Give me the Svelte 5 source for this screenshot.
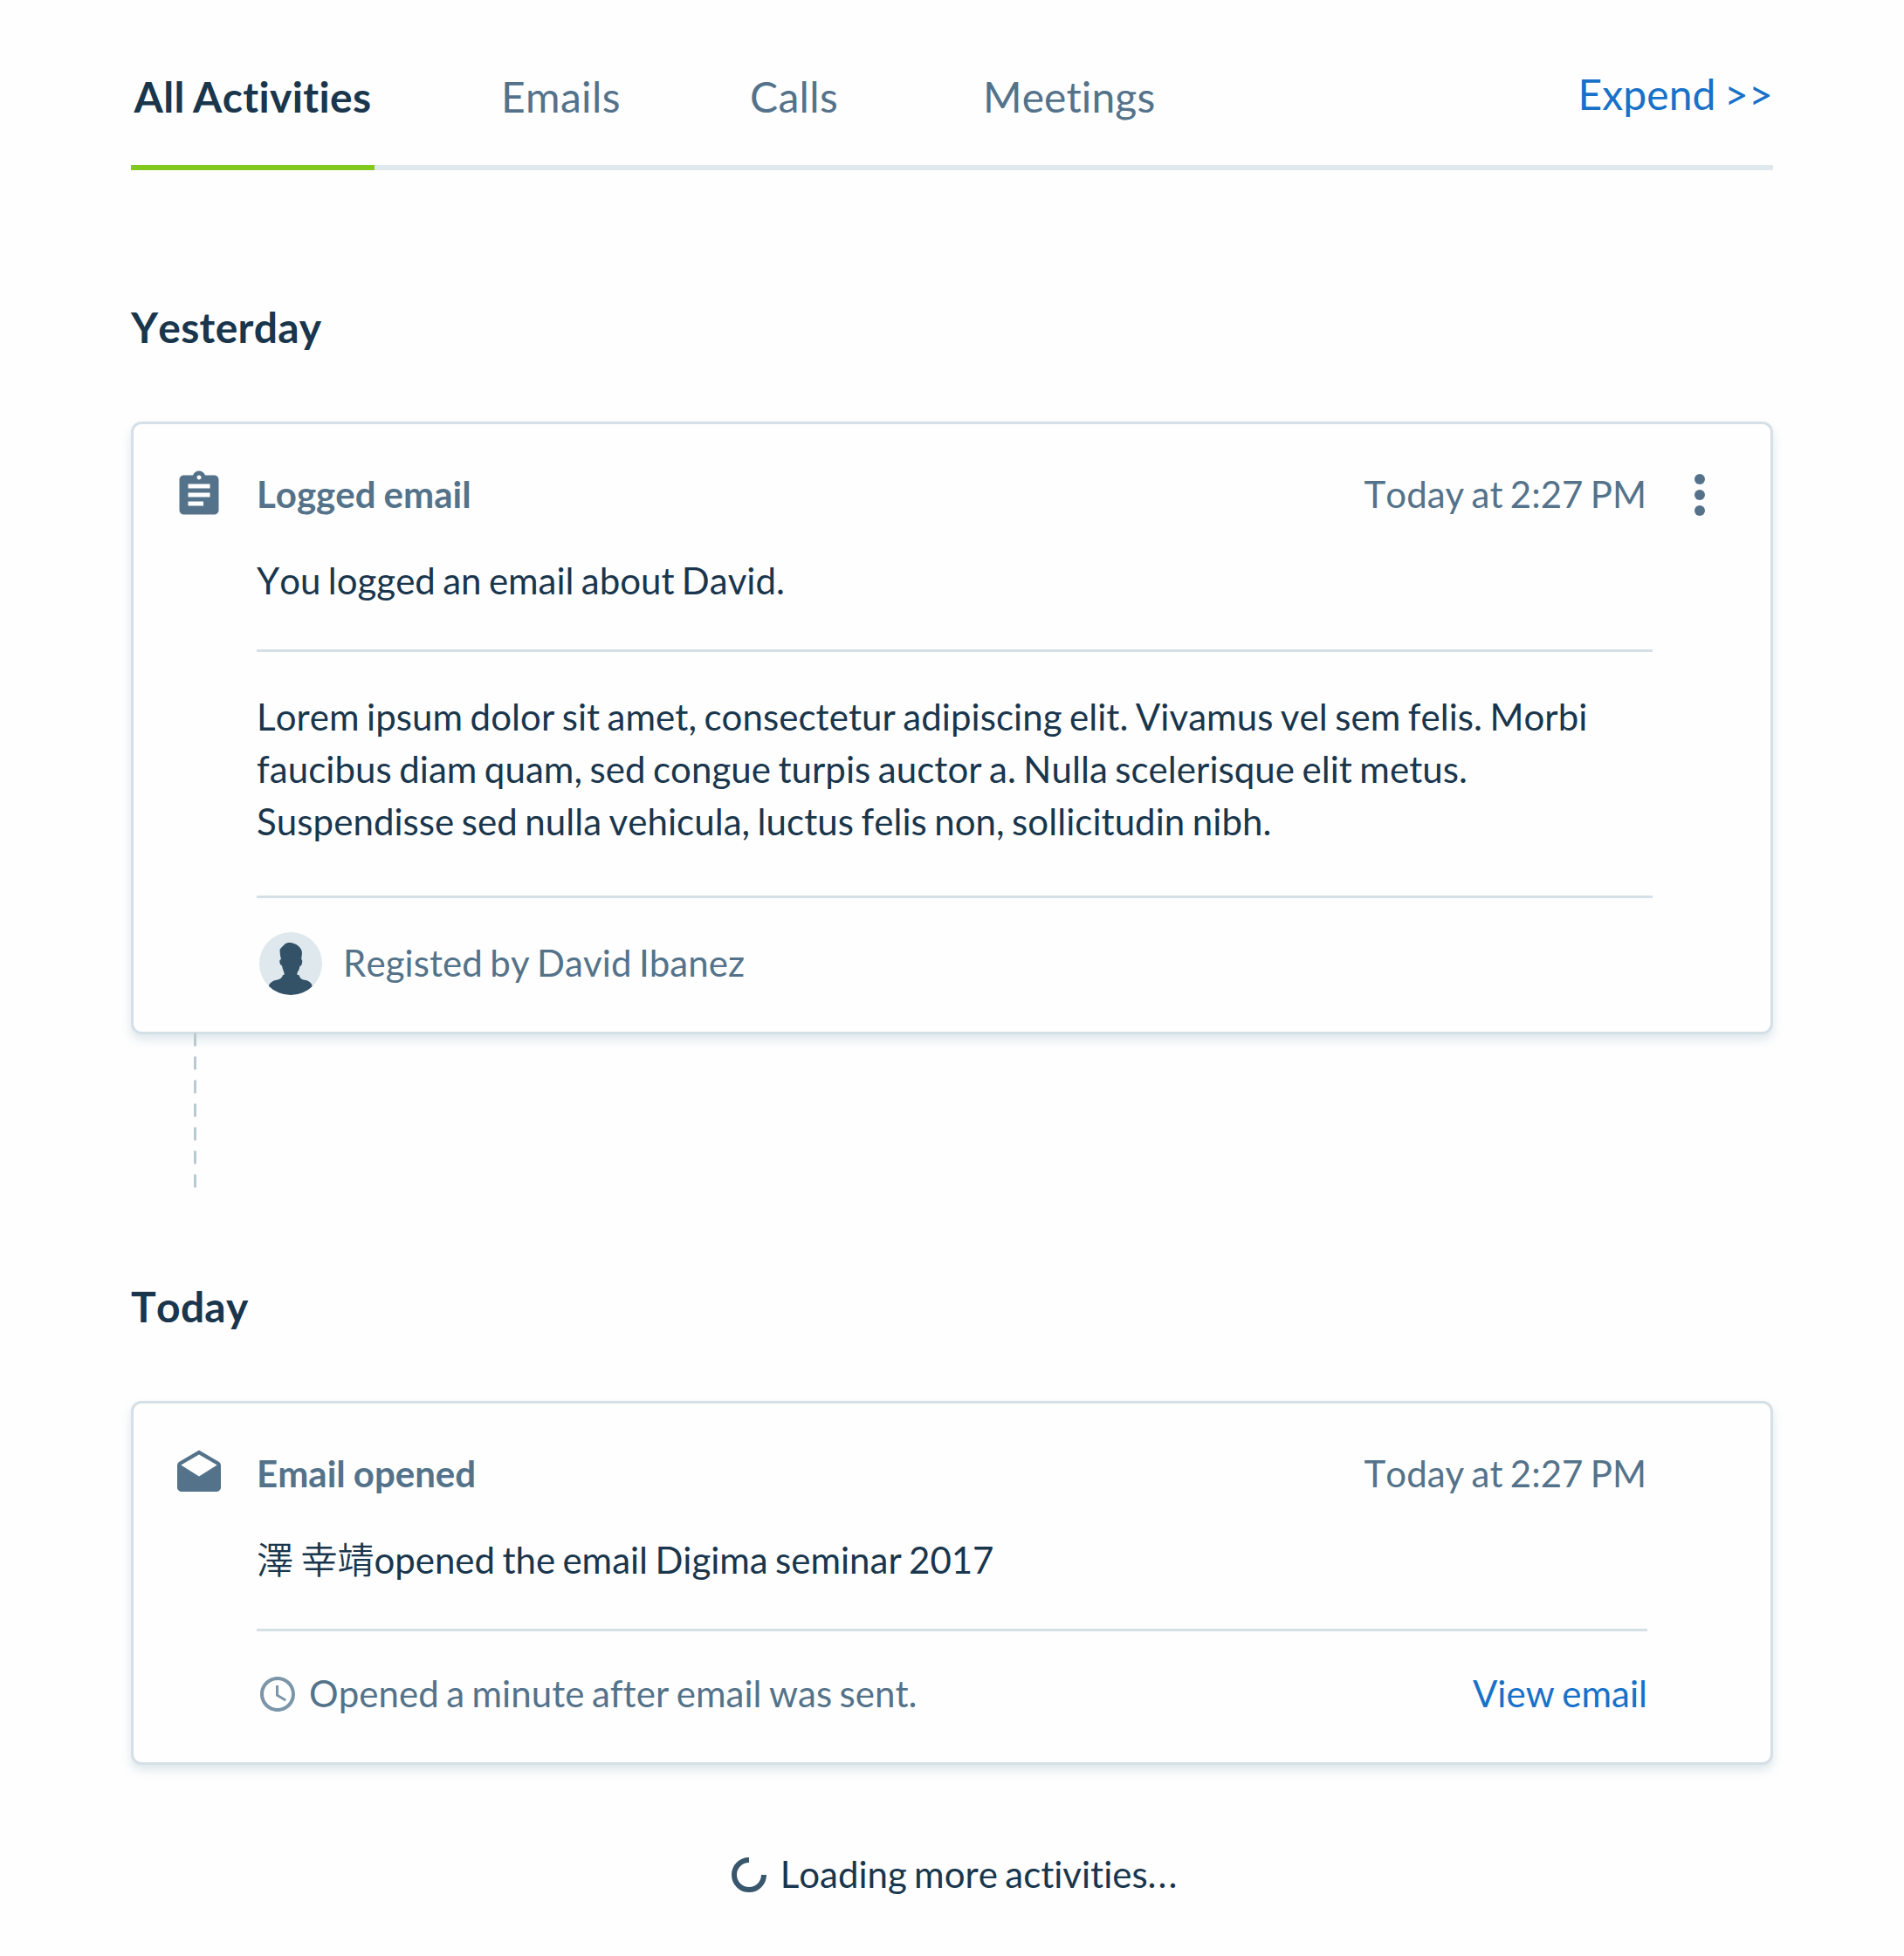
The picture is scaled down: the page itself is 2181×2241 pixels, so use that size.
<script>
  const tabs = ['All Activities', 'Emails', 'Calls', 'Meetings'];
  let active = $state('All Activities');
</script>

<main class="page">
  <header class="tabbar">
    <nav class="tabs">
      {#each tabs as tab}
        <button class="tab" class:active={active === tab} onclick={() => (active = tab)}><span>{tab}</span></button>
      {/each}
    </nav>
    <a class="expand" href="#all">Expend &gt;&gt;</a>
  </header>

  <section class="group first">
    <h2>Yesterday</h2>
    <article class="card">
      <div class="head">
        <svg class="icon" viewBox="0 0 24 24"><path d="M19 3h-4.180C14.400 1.840 13.300 1 12 1s-2.400.84-2.820 2H5c-1.100 0-2 .9-2 2v14c0 1.100.9 2 2 2h14c1.100 0 2-.9 2-2V5c0-1.100-.9-2-2-2zm-7 0c.55 0 1 .45 1 1s-.45 1-1 1-1-.45-1-1 .45-1 1-1zm2 14H7v-2h7v2zm3-4H7v-2h10v2zm0-4H7V7h10v2z" /></svg>
        <h3>Logged email</h3>
        <time>Today at 2:27 PM</time>
        <button class="more" aria-label="More">
          <svg viewBox="0 0 24 24"><circle cx="12" cy="6" r="2" /><circle cx="12" cy="12" r="2" /><circle cx="12" cy="18" r="2" /></svg>
        </button>
      </div>
      <div class="body wide">
        <p class="summary">You logged an email about David.</p>
        <p class="message">Lorem ipsum dolor sit amet, consectetur adipiscing elit. Vivamus vel sem felis. Morbi<br />faucibus diam quam, sed congue turpis auctor a. Nulla scelerisque elit metus.<br />Suspendisse sed nulla vehicula, luctus felis non, sollicitudin nibh.</p>
        <div class="author">
          <svg class="avatar" viewBox="0 0 72 72">
            <clipPath id="disc"><circle cx="36" cy="36" r="36" /></clipPath>
            <circle cx="36" cy="36" r="36" fill="#dfe8ed" />
            <path clip-path="url(#disc)" fill="#335268" d="M29 14C31 12 35 11.500 38 12.500C43 13.500 47 17 48.500 21C49.500 24 48.500 27 48.200 31Q49.800 32 49 35Q48.800 38.500 46.500 39Q46 43 43.500 46.500V49H45.500Q46.500 54 52 54.800Q59 56 60.500 61V73H11V61Q13 56 20 54.800Q26 53.500 27 49H28.500V46.500Q26.500 42 26 38.500Q23.800 38 23.500 35Q22.500 31.500 25 31Q23.500 26 23.500 20Q24.500 18 29 14Z" />
          </svg>
          <span>Registed by David Ibanez</span>
        </div>
      </div>
    </article>
    <svg class="thread" viewBox="0 0 3 178"><path d="M1.500 .5V178" /></svg>
  </section>

  <section class="group">
    <h2>Today</h2>
    <article class="card">
      <div class="head">
        <svg class="icon" viewBox="0 0 24 24"><path d="M21.990 8c0-.72-.37-1.350-.94-1.700L12 1 2.950 6.300C2.380 6.650 2 7.280 2 8v10c0 1.100.9 2 2 2h16c1.100 0 2-.9 2-2l-.01-10zM12 13L3.740 7.840 12 3l8.260 4.840L12 13z" /></svg>
        <h3>Email opened</h3>
        <time>Today at 2:27 PM</time>
      </div>
      <div class="body">
        <p class="summary"><span class="name">澤 幸靖</span>opened the email Digima seminar 2017</p>
        <div class="status">
          <svg class="clock" viewBox="0 0 24 24"><path d="M11.990 2C6.470 2 2 6.480 2 12s4.470 10 9.990 10C17.520 22 22 17.520 22 12S17.520 2 11.990 2zM12 20c-4.420 0-8-3.580-8-8s3.580-8 8-8 8 3.580 8 8-3.580 8-8 8zm.5-13H11v6l5.250 3.150.75-1.230-4.500-2.670z" /></svg>
          <span>Opened a minute after email was sent.</span>
          <a href="#view">View email</a>
        </div>
      </div>
    </article>
  </section>

  <div class="loading">
    <svg viewBox="0 0 40 40"><path d="M20 3A17 17 0 1 0 37 20" /></svg>
    <span>Loading more activities<i>...</i></span>
  </div>
</main>

<style>
  :global(body) { background: #fefefe; }
  .page {
    box-sizing: border-box;
    width: 2181px;
    height: 2241px;
    padding: 0 150px;
    overflow: hidden;
    font: 42px/60px Lato, "Noto Sans CJK JP", sans-serif;
    font-kerning: none;
    font-variant-ligatures: none;
    word-spacing: -2.400px;
    color: #19364d;
  }
  h2, h3, p { margin: 0; }
  a { color: #1871c9; text-decoration: none; }
  button { border: 0; padding: 0; background: none; font: inherit; font-kerning: none; font-variant-ligatures: none; letter-spacing: inherit; word-spacing: inherit; color: inherit; }
  .tabbar {
    box-sizing: border-box;
    display: flex;
    justify-content: space-between;
    width: 1881px;
    height: 195px;
    border-bottom: 6px solid #dfe8ed;
    font-size: 48px;
    word-spacing: -2.800px;
  }
  .tabs { display: grid; grid-template-columns: 424px 285px 267px auto; letter-spacing: .35px; }
  .tab {
    box-sizing: border-box;
    height: 195px;
    padding-top: 81px;
    display: flex;
    justify-self: start;
    align-items: flex-start;
    color: #54738a;
  }
  .tab:last-child { letter-spacing: .1px; }
  .tab.active {
    width: 279px;
    justify-content: center;
    border-bottom: 6px solid #82c91e;
    color: #19364d;
    font-weight: 700;
  }
  .expand { padding-top: 78px; letter-spacing: .1px; }
  .group { padding-top: 103px; }
  .group.first { box-sizing: border-box; padding-top: 150px; height: 1169px; }
  h2 { font-size: 48px; line-height: 60px; font-weight: 700; letter-spacing: .25px; }
  .card {
    box-sizing: border-box;
    width: 1881px;
    margin-top: 78px;
    border: 3px solid #d5dfe6;
    border-radius: 12px;
    box-shadow: 0 6px 12px rgba(92, 138, 160, .2);
    background: #fefefe;
    padding: 51px 0 0 45px;
  }
  .head { display: flex; height: 60px; color: #54738a; }
  .icon { width: 60px; height: 60px; fill: currentColor; }
  h3 { margin: -1px 0 0 36px; font-size: 42px; line-height: 60px; font-weight: 700; word-spacing: -1.200px; }
  time { margin: -1px 142px 0 auto; }
  .more { width: 72px; height: 72px; margin: -6px 45px 0 -117px; }
  .more svg { display: block; width: 72px; height: 72px; fill: #54738a; }
  .body { width: 1593px; margin-left: 96px; }
  .body.wide { width: 1599px; }
  .summary { padding: 38px 0 49px; border-bottom: 3px solid #d5dfe6; }
  .message { padding: 44px 0 55px; border-bottom: 3px solid #d5dfe6; letter-spacing: .06px; }
  .author { display: flex; align-items: center; height: 150px; padding: 0 0 3px 3px; gap: 24px; color: #54738a; letter-spacing: .07px; }
  .author span, .status span, .status a, .loading span { padding-bottom: 2px; }
  .avatar { width: 72px; height: 72px; }
  .thread { display: block; width: 3px; height: 178px; margin: -2px 0 0 72px; fill: none; stroke: #b9c9d4; stroke-width: 3; stroke-dasharray: 15 12; }
  .name { font-weight: 350; word-spacing: -3px; }
  .status { display: flex; align-items: center; height: 144px; padding-bottom: 6px; color: #54738a; letter-spacing: .05px; }
  .clock { width: 48px; height: 48px; margin-right: 12px; fill: #7b95a9; }
  .status a { margin-left: auto; }
  .loading { display: flex; justify-content: center; align-items: center; height: 60px; margin-top: 96px; padding-left: 7px; }
  .loading svg { width: 40px; height: 40px; margin-right: 16px; fill: none; stroke: #38566c; stroke-width: 6; }
  .loading i { font-style: normal; letter-spacing: 2px; }
</style>
